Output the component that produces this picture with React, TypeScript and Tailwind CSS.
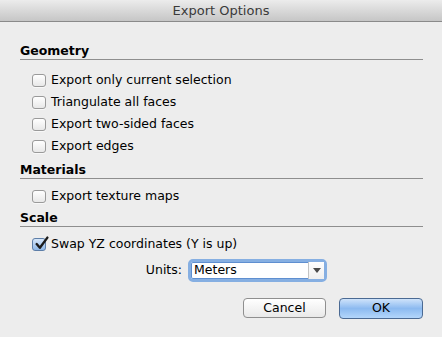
import { useState } from "react";

const font = { fontFamily: '"Lucida Grande", "DejaVu Sans", sans-serif' };

function Check({ label, checked, onChange }: { label: string; checked: boolean; onChange: () => void }) {
  return (
    <button type="button" className="flex h-[22px] items-center pl-[12px] text-left" onClick={onChange}>
      <span
        className={
          checked
            ? "relative flex h-[13px] w-[14px] items-center justify-center rounded-[3px] border border-[#5d7ea8] bg-gradient-to-b from-[#d6e6f9] to-[#8db6e6]"
            : "h-[13px] w-[14px] rounded-[3px] border border-[#9a9a9a] bg-gradient-to-b from-[#ffffff] to-[#e8e8e8] shadow-[0_1px_0_rgba(255,255,255,0.6)]"
        }
      >
        {checked ? (
          <svg viewBox="0 0 14 14" className="absolute -top-[3px] left-[1px] h-[15px] w-[15px]">
            <path d="M2.5 7.5 L5.5 11 L12.5 1.5" fill="none" stroke="#1a1a1a" strokeWidth="2.2" strokeLinecap="round" strokeLinejoin="round" />
          </svg>
        ) : null}
      </span>
      <span className="ml-[5px] text-[12.5px] text-black">{label}</span>
    </button>
  );
}

function Heading({ children, className = "" }: { children: string; className?: string }) {
  return (
    <div className={`flex h-[19px] items-end border-b border-[#8e8e8e] pb-[1px] text-[12.5px] leading-[15px] font-bold text-black ${className}`}>
      {children}
    </div>
  );
}

export default function App() {
  const [opts, setOpts] = useState({
    selection: false,
    triangulate: false,
    twoSided: false,
    edges: false,
    texture: false,
    swap: true,
  });
  const toggle = (k: keyof typeof opts) => setOpts((p) => ({ ...p, [k]: !p[k] }));

  return (
    <div className="h-[337px] w-[442px] overflow-hidden bg-[#ededed]" style={font}>
      <div className="flex h-[22px] items-center justify-center border-b border-[#8a8a8a] bg-gradient-to-b from-[#ececec] to-[#c6c6c6] text-[13px] text-[#3a3a3a]">
        Export Options
      </div>

      <div className="flex flex-col pl-[20px] pr-[19px] pt-[19px]">
        <Heading>Geometry</Heading>
        <div className="mt-[9px] flex flex-col items-start">
          <Check label="Export only current selection" checked={opts.selection} onChange={() => toggle("selection")} />
          <Check label="Triangulate all faces" checked={opts.triangulate} onChange={() => toggle("triangulate")} />
          <Check label="Export two-sided faces" checked={opts.twoSided} onChange={() => toggle("twoSided")} />
          <Check label="Export edges" checked={opts.edges} onChange={() => toggle("edges")} />
        </div>

        <Heading className="mt-[3px]">Materials</Heading>
        <div className="mt-[6px] flex flex-col items-start">
          <Check label="Export texture maps" checked={opts.texture} onChange={() => toggle("texture")} />
        </div>

        <Heading className="mt-[1px]">Scale</Heading>
        <div className="mt-[6px] flex flex-col items-start">
          <Check label="Swap YZ coordinates (Y is up)" checked={opts.swap} onChange={() => toggle("swap")} />
        </div>

        <div className="mt-[4px] flex h-[23px] items-center">
          <span className="w-[168px] pr-[6px] text-right text-[12.5px] text-black">Units:</span>
          <div className="flex h-[23px] w-[139px] rounded-[5px] border-[3px] border-[#86afe2] bg-white shadow-[inset_0_0_0_1px_#5f8fd0]">
            <div className="flex flex-1 items-center pl-[3px] text-[12.5px] text-black">Meters</div>
            <div className="flex w-[16px] items-center justify-center border-l border-[#c4c4c4] bg-gradient-to-b from-[#ffffff] to-[#efefef]">
              <svg viewBox="0 0 8 5" className="h-[5px] w-[8px]">
                <path d="M0 0 H8 L4 5 Z" fill="#4a4a4a" />
              </svg>
            </div>
          </div>
        </div>

        <div className="mt-[16px] flex justify-end gap-[13px]">
          <button
            type="button"
            className="h-[20px] w-[83px] rounded-[4px] border border-[#8f8f8f] bg-gradient-to-b from-[#ffffff] to-[#e9e9e9] text-[12.5px] text-black"
          >
            Cancel
          </button>
          <button
            type="button"
            className="h-[21px] w-[84px] rounded-[4px] border border-[#4b6a93] bg-gradient-to-b from-[#cfe3fa] via-[#8cbaf0] to-[#b3d6fb] text-[12.5px] text-black"
          >
            OK
          </button>
        </div>
      </div>
    </div>
  );
}
